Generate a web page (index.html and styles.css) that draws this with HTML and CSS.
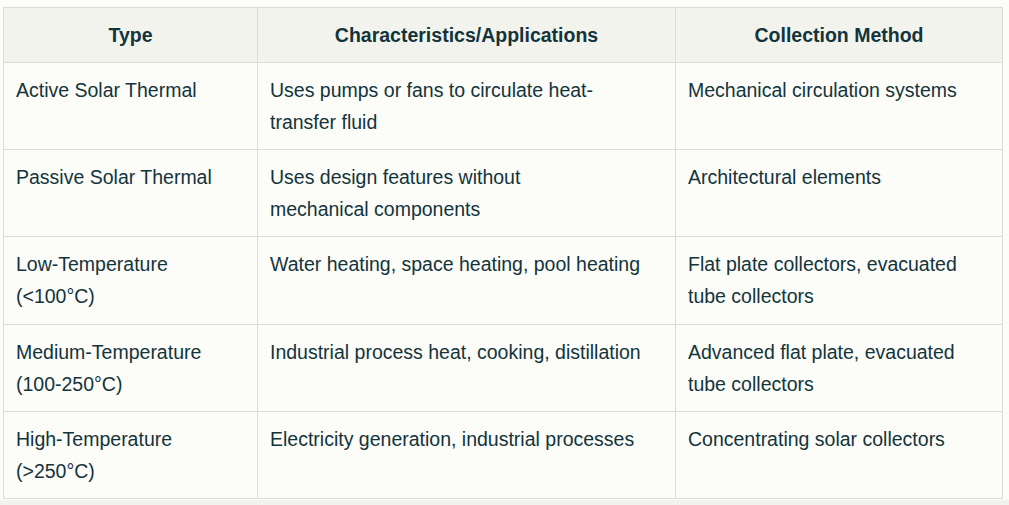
FILE: index.html
```html
<!DOCTYPE html>
<html lang="en">
<head>
<meta charset="utf-8">
<title>Solar Thermal Types</title>
<link rel="stylesheet" href="styles.css">
</head>
<body>
<div class="wrap">
<table class="tbl">
<colgroup>
<col class="c1"><col class="c2"><col class="c3">
</colgroup>
<thead>
<tr><th>Type</th><th>Characteristics/Applications</th><th>Collection Method</th></tr>
</thead>
<tbody>
<tr><td>Active Solar Thermal</td><td>Uses pumps or fans to circulate heat-<br>transfer fluid</td><td>Mechanical circulation systems</td></tr>
<tr><td>Passive Solar Thermal</td><td>Uses design features without<br>mechanical components</td><td>Architectural elements</td></tr>
<tr><td>Low-Temperature (&lt;100°C)</td><td>Water heating, space heating, pool heating</td><td>Flat plate collectors, evacuated tube collectors</td></tr>
<tr><td>Medium-Temperature (100-250°C)</td><td>Industrial process heat, cooking, distillation</td><td>Advanced flat plate, evacuated tube collectors</td></tr>
<tr><td>High-Temperature (&gt;250°C)</td><td>Electricity generation, industrial processes</td><td>Concentrating solar collectors</td></tr>
</tbody>
</table>
</div>
<div class="track"></div>
</body>
</html>
```
FILE: styles.css
```css
html, body {
  margin: 0;
  background: #fcfcf9;
}
body {
  font-family: "Liberation Sans", Arial, sans-serif;
  color: #13343b;
}
.wrap {
  padding: 7px 0 1px 3px;
}
.track {
  height: 8px;
  background: #f1f1ef;
}
.tbl {
  border-collapse: collapse;
  width: 999px;
  table-layout: fixed;
  font-size: 19.5px;
  line-height: 32px;
}
.c1 { width: 254px; }
.c2 { width: 418px; }
.c3 { width: 327px; }
.tbl th, .tbl td {
  border: 1px solid #dcdcd7;
  vertical-align: top;
}
.tbl th {
  background: #f3f3ee;
  font-weight: bold;
  text-align: center;
  padding: 11px 12px 11px;
}
.tbl td {
  text-align: left;
  padding: 11px 12px 11.2px;
  height: 64px;
}
```
